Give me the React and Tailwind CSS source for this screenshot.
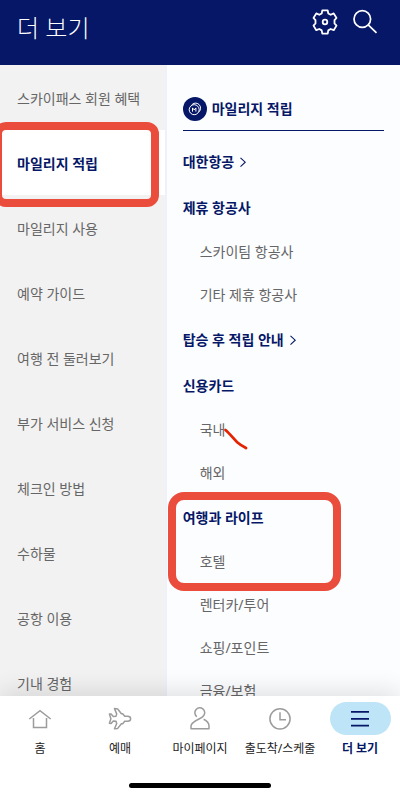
// Mileage menu ("더 보기") screen
const CATEGORIES = [
  "스카이패스 회원 혜택",
  "마일리지 적립",
  "마일리지 사용",
  "예약 가이드",
  "여행 전 둘러보기",
  "부가 서비스 신청",
  "체크인 방법",
  "수하물",
  "공항 이용",
  "기내 경험",
];

const SECTIONS = [
  { title: "대한항공", link: true, items: [] },
  { title: "제휴 항공사", items: ["스카이팀 항공사", "기타 제휴 항공사"] },
  { title: "탑승 후 적립 안내", link: true, items: [] },
  { title: "신용카드", items: ["국내", "해외"] },
  { title: "여행과 라이프", items: ["호텔", "렌터카/투어", "쇼핑/포인트", "금융/보험"] },
];

const ACTIVE = "마일리지 적립";

function GearIcon() {
  return (
    <svg className="size-7" viewBox="0 0 28 28" fill="none" stroke="currentColor" strokeWidth="1.8" strokeLinejoin="round">
      <path d="M11.3 2.4h5.4l.6 3.1 2.4 1.3 3-1.4 2.8 4.6-2 2.2v3.2l2 2.2-2.8 4.6-3-1.2-2.4 1.4-.6 3.2h-5.4l-.6-3.2-2.4-1.4-3 1.2-2.8-4.6 2-2.200v-3.200l-2-2.200 2.800-4.600 3 1.400 2.400-1.300z" />
      <circle cx="14" cy="14" r="2.3" />
    </svg>
  );
}

function SearchIcon() {
  return (
    <svg className="size-7" viewBox="0 0 28 28" fill="none" stroke="currentColor" strokeWidth="1.7">
      <circle cx="11.3" cy="11" r="8.3" />
      <path d="M17.2 16.800l8.3 8" />
    </svg>
  );
}

function MileageIcon() {
  return (
    <svg className="size-6 shrink-0" viewBox="0 0 24 24" fill="none">
      <circle cx="12" cy="12" r="12" fill="#051766" />
      <g stroke="#fff" strokeWidth="1">
        <path d="M8.5 8.2a5 5 0 1 1 7.2 6.8" />
        <circle cx="11.2" cy="12.7" r="5" />
        <path d="M9.5 14.6v-3.7l1.7 2 1.7-2v3.7" />
      </g>
    </svg>
  );
}

function Chevron() {
  return (
    <svg className="w-2 h-3" viewBox="0 0 8 12" fill="none" stroke="currentColor" strokeWidth="1.1">
      <path d="M1.5 1.8l4.7 4.4-4.7 4.4" />
    </svg>
  );
}

const navIcon = {
  className: "size-6",
  viewBox: "0 0 24 24",
  fill: "none",
  stroke: "currentColor",
  strokeWidth: "1.5",
};

const NAV = [
  {
    label: "홈",
    icon: (
      <svg {...navIcon}>
        <path d="M1.3 12L12 3.6 22.700 12M5.500 11v9.600h13V11" />
      </svg>
    ),
  },
  {
    label: "예매",
    icon: (
      <svg {...navIcon} strokeLinejoin="round">
        <path d="M22.6 11.7c0-1.500-1.300-2.500-3-2.500h-2.900l-2-2.500h-1.300L9.700 2 6.500 1.600l2.200 5.300-.7 2.300-2.700.3-2.200-2.600-1.700.2 1.500 4.600-1.500 4.600 1.700.2 2.200-2.600 2.700.3.700 2.300-2.200 5.300 3.200-.4 3.700-4.700h1.300l2-2.500h2.900c1.700 0 3-.900 3-2.200z" />
      </svg>
    ),
  },
  {
    label: "마이페이지",
    icon: (
      <svg {...navIcon} strokeLinejoin="round">
        <path d="M8.800 9.600a4.900 4.900 0 1 1 6.800-.8c-1 1.400-2.300 2.100-4.600 3.200-4.800 2.300-8 4-8 7v2.700h18V19c0-2.900-2.200-5.200-5.400-6.700" />
      </svg>
    ),
  },
  {
    label: "출도착/스케줄",
    icon: (
      <svg {...navIcon}>
        <circle cx="12" cy="11.8" r="10.1" />
        <path d="M12 5.3v7.5h6" />
      </svg>
    ),
  },
  {
    label: "더 보기",
    active: true,
    icon: (
      <svg {...navIcon} strokeWidth="1.7">
        <path d="M3 4.900h18M3 11.800h18M3 18.700h18" />
      </svg>
    ),
  },
];

export default function App() {
  return (
    <div className="flex h-screen flex-col overflow-hidden bg-[#fcfdff] font-['Noto_Sans','Noto_Sans_CJK_KR',sans-serif] text-sm text-[#666]">
      <header className="flex h-[65px] shrink-0 justify-between bg-[#051766] pl-[17px] pr-[21px] text-white">
        <h1 className="pt-2.5 text-2xl font-light leading-9">더 보기</h1>
        <div className="flex gap-3 pt-2">
          <button aria-label="설정" className="size-7">
            <GearIcon />
          </button>
          <button aria-label="검색" className="size-7">
            <SearchIcon />
          </button>
        </div>
      </header>

      <main className="flex min-h-0 flex-1 overflow-hidden">
        {/* Categories */}
        <nav className="w-5/12 shrink-0 border-r-2 border-[#eef0fa] bg-[#f2f2f2]">
          <ul>
            {CATEGORIES.map((name) => (
              <li key={name} className="relative">
                <a
                  href="#"
                  className={
                    name === ACTIVE
                      ? "flex h-[65px] items-center bg-white pl-[17px] pt-0.5 font-bold text-[#051766]"
                      : "flex h-[65px] items-center pl-[17px] pt-0.5"
                  }
                >
                  {name}
                </a>
                {name === ACTIVE && (
                  <span className="pointer-events-none absolute -bottom-3 -left-1.5 -top-2 right-1.5 z-10 rounded-xl border-8 border-[#eb4d3d]" />
                )}
              </li>
            ))}
          </ul>
        </nav>

        {/* Sub menu */}
        <div className="min-w-0 flex-1 pl-4 pr-4 pt-[22px]">
          <h2 className="flex h-11 items-center gap-[5px] border-b border-[#051766] font-bold text-[#051766]">
            <MileageIcon />
            마일리지 적립
          </h2>
          <div className="flex flex-col gap-0.5 pt-[9px]">
            {SECTIONS.map(({ title, link, items }) => (
              <section key={title} className="relative">
                <h3 className="flex h-11 items-center font-bold text-[#051766]">
                  {link ? (
                    <a href="#" className="flex items-center gap-[5px]">
                      {title}
                      <Chevron />
                    </a>
                  ) : (
                    title
                  )}
                </h3>
                <ul>
                  {items.map((item) => (
                    <li key={item} className="relative">
                      <a href="#" className="flex h-[43px] items-center pl-[17px]">
                        {item}
                      </a>
                      {item === "국내" && (
                        <svg
                          className="pointer-events-none absolute left-10 top-5 h-6 w-7"
                          viewBox="0 0 28 24"
                          fill="none"
                          stroke="#e42300"
                          strokeWidth="2.8"
                          strokeLinecap="round"
                        >
                          <path d="M2.500 2C6.500 5.500 10.500 10.500 14.500 14.500Q18 17.500 23 20" />
                        </svg>
                      )}
                    </li>
                  ))}
                </ul>
                {title === "여행과 라이프" && (
                  <span className="pointer-events-none absolute -left-[15px] -top-1 h-[99px] w-[173px] rounded-2xl border-8 border-[#eb4d3d]" />
                )}
              </section>
            ))}
          </div>
        </div>
      </main>

      {/* Bottom tab bar */}
      <footer className="relative z-20 flex h-[99px] shrink-0 flex-col items-center justify-between bg-white pb-[7px] pt-1.5 shadow-[0_-4px_24px_rgba(0,0,0,0.12)]">
        <nav className="grid w-full grid-cols-5">
          {NAV.map(({ label, icon, active }) => (
            <a
              key={label}
              href="#"
              className={
                active
                  ? "flex flex-col items-center gap-1.5 text-xs font-bold text-[#051766]"
                  : "flex flex-col items-center gap-1.5 text-xs text-[#222]"
              }
            >
              <span
                className={
                  active
                    ? "flex h-[33px] w-[61px] items-center justify-center rounded-full bg-[#bde5f7]"
                    : "flex h-[33px] w-[61px] items-center justify-center text-[#9c9c9c]"
                }
              >
                {icon}
              </span>
              <span className="whitespace-nowrap">{label}</span>
            </a>
          ))}
        </nav>
        <div className="h-[5px] w-[142px] rounded-full bg-black" />
      </footer>
    </div>
  );
}
